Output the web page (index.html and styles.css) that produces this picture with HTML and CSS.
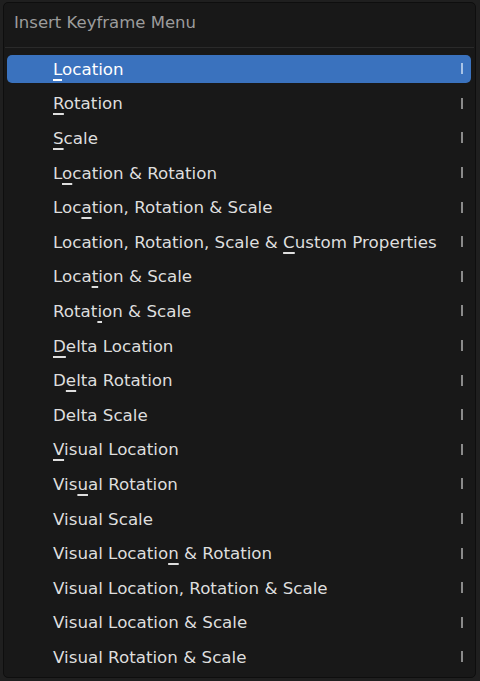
FILE: index.html
```html
<!DOCTYPE html>
<html>
<head>
<meta charset="utf-8">
<link rel="stylesheet" href="styles.css">
</head>
<body>
<div class="menu">
  <div class="title">Insert Keyframe Menu</div>
  <div class="sep"></div>
  <ul class="items">
    <li class="item active"><span class="label"><u>L</u>ocation</span><span class="mark"></span></li>
    <li class="item"><span class="label"><u>R</u>otation</span><span class="mark"></span></li>
    <li class="item"><span class="label"><u>S</u>cale</span><span class="mark"></span></li>
    <li class="item"><span class="label">L<u>o</u>cation &amp; Rotation</span><span class="mark"></span></li>
    <li class="item"><span class="label">Loc<u>a</u>tion, Rotation &amp; Scale</span><span class="mark"></span></li>
    <li class="item"><span class="label">Location, Rotation, Scale &amp; <u>C</u>ustom Properties</span><span class="mark"></span></li>
    <li class="item"><span class="label">Loca<u>t</u>ion &amp; Scale</span><span class="mark"></span></li>
    <li class="item"><span class="label">Rotat<u>i</u>on &amp; Scale</span><span class="mark"></span></li>
    <li class="item"><span class="label"><u>D</u>elta Location</span><span class="mark"></span></li>
    <li class="item"><span class="label">D<u>e</u>lta Rotation</span><span class="mark"></span></li>
    <li class="item"><span class="label">Delta Scale</span><span class="mark"></span></li>
    <li class="item"><span class="label"><u>V</u>isual Location</span><span class="mark"></span></li>
    <li class="item"><span class="label">Vis<u>u</u>al Rotation</span><span class="mark"></span></li>
    <li class="item"><span class="label">Visual Scale</span><span class="mark"></span></li>
    <li class="item"><span class="label">Visual Locatio<u>n</u> &amp; Rotation</span><span class="mark"></span></li>
    <li class="item"><span class="label">Visual Location, Rotation &amp; Scale</span><span class="mark"></span></li>
    <li class="item"><span class="label">Visual Location &amp; Scale</span><span class="mark"></span></li>
    <li class="item"><span class="label">Visual Rotation &amp; Scale</span><span class="mark"></span></li>
  </ul>
</div>
</body>
</html>
```

FILE: styles.css
```css
html, body {
  margin: 0;
  padding: 0;
  background: #1f1f1f;
  width: 480px;
  height: 681px;
  overflow: hidden;
}
body {
  font-family: "DejaVu Sans", "Liberation Sans", sans-serif;
}
.menu {
  box-sizing: border-box;
  margin: 2px 0 0 3px;
  width: 473px;
  height: 676px;
  background: #181818;
  border: 1px solid #0e0e0e;
  border-radius: 5px;
  display: flex;
  flex-direction: column;
}
.title {
  height: 44px;
  box-sizing: border-box;
  padding: 10px 0 0 10px;
  font-size: 16.5px;
  color: #9c9c9c;
  line-height: 20px;
}
.sep {
  height: 1px;
  background: #2a2a2a;
  margin: 0 1px;
}
.items {
  list-style: none;
  margin: 0;
  padding: 3.5px 0 0 0;
}
.item {
  height: 34.6px;
  display: flex;
  align-items: center;
  justify-content: space-between;
  margin: 0 4px 0 3px;
  box-sizing: border-box;
  padding: 0 8px 0 46px;
  font-size: 16.7px;
  color: #dedede;
  position: relative;
}
.item.active::before {
  content: "";
  position: absolute;
  left: 0;
  right: 0;
  top: 3.5px;
  bottom: 3.5px;
  background: #3a72be;
  border-radius: 5px;
  z-index: 0;
}
.label, .mark {
  position: relative;
  z-index: 1;
}
.label u {
  text-decoration-thickness: 1.5px;
  text-underline-offset: 4px;
}
.item.active .label {
  color: #ffffff;
}
.mark {
  width: 2px;
  height: 11px;
  background: #8a8a8a;
}
.item.active .mark {
  background: #a9c4e6;
}
```
